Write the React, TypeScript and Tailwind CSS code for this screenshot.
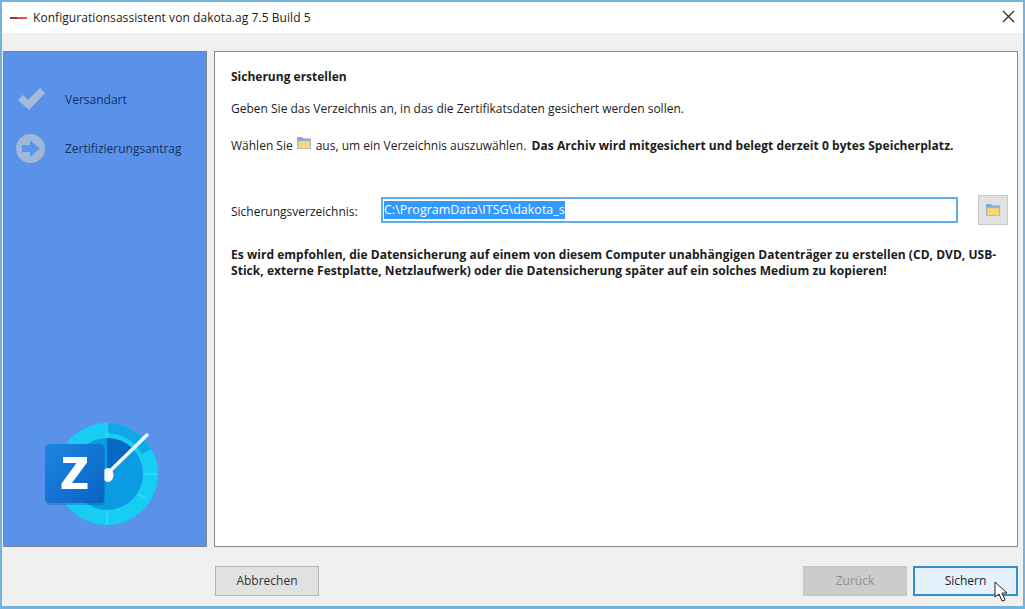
function FolderIcon({ className }: { className?: string }) {
  return (
    <svg className={className} viewBox="0 0 16 14">
      <path d="M1 2.5C1 1.7 1.6 1 2.4 1h3.4l1.6 1.6h6.2c.8 0 1.4.6 1.4 1.4v1H1z" fill="#7fa6cf" />
      <rect x="1" y="4" width="14" height="9" rx="1" fill="#9db8d4" />
      <rect x="2.4" y="5.2" width="11.6" height="7" rx="0.6" fill="#fbd774" />
    </svg>
  );
}

function Logo() {
  return (
    <svg className="w-[116px] h-[108px]" viewBox="0 0 116 108">
      <defs>
        <linearGradient id="tile" x1="0" y1="0" x2="1" y2="1">
          <stop offset="0" stopColor="#1c86e0" />
          <stop offset="1" stopColor="#0a62c4" />
        </linearGradient>
      </defs>
      {/* Zifferblatt */}
      <circle cx="62" cy="52" r="51" fill="#18cdf2" />
      <path d="M62 1a51 51 0 0 1 44 26l-9 5a41 41 0 0 0-35-21z" fill="#10a8e8" />
      <circle cx="62" cy="52" r="36" fill="#0b9be3" />
      <path d="M62 16a36 36 0 0 1 25 10L62 52z" fill="#0468c4" />
      <path d="M62 88v14M98 52h14M24 30l-9-5M24 74l-9 5M93 72l9 5M62 1v15" stroke="#4fdcf5" strokeWidth="1" />
      <path d="M62 52L102 13" stroke="#f4fafd" strokeWidth="3.5" strokeLinecap="round" />
      <ellipse cx="63" cy="53" rx="5.5" ry="7" fill="#f4fafd" />
      {/* Kachel */}
      <rect x="1" y="24" width="59" height="59" rx="4" fill="#0b4f9e" opacity="0.3" />
      <rect x="0" y="22" width="59" height="59" rx="4" fill="url(#tile)" />
      <path d="M18 35h24v5.5L27 61h15.5v6H16.5v-5.5L31.5 41H18z" fill="#ffffff" />
    </svg>
  );
}

function StepCheck() {
  return (
    <svg className="w-[30px] h-[24px]" viewBox="0 0 30 24">
      <path d="M2 12l5-5 5 5L24 0l5 5-16 17z" fill="#a4bcda" />
    </svg>
  );
}

function StepArrow() {
  return (
    <svg className="w-[30px] h-[30px] shrink-0" viewBox="0 0 30 30">
      <circle cx="14.5" cy="14.5" r="14.5" fill="#9fb8d8" />
      <path d="M6 11h8V6l10 8.5L14 23v-5H6z" fill="#5a96ee" />
    </svg>
  );
}

function Cursor() {
  return (
    <svg className="absolute left-[79px] top-[13px] w-[14px] h-[21px]" viewBox="0 0 14 21">
      <path d="M1 1v15l4-3 3 7 3-1-3-7h5z" fill="#ffffff" stroke="#222222" strokeWidth="1" />
    </svg>
  );
}

export default function App() {
  return (
    <div className="w-[1025px] h-[609px] flex flex-col bg-[#f0f0f0] border-x-2 border-t-2 border-b-[3px] border-[#74b4dc] text-[12px] text-[#1c1c1c] font-['Open_Sans','Noto_Sans',sans-serif] overflow-hidden">
      {/* Titelleiste */}
      <div className="h-[31px] shrink-0 bg-white flex items-center pl-[8px] pr-[8px]">
        <svg className="w-[17px] h-[6px] mr-[6px]" viewBox="0 0 17 6">
          <rect x="0" y="2" width="17" height="2" fill="#e0525a" />
          <rect x="0" y="2" width="7" height="2" fill="#8c3a3f" />
        </svg>
        <span className="tracking-[0.06px]">Konfigurationsassistent von dakota.ag 7.5 Build 5</span>
        <svg className="ml-auto -mt-[2px] w-[13px] h-[13px]" viewBox="0 0 13 13">
          <path d="M1 1l11 11M12 1L1 12" stroke="#333333" strokeWidth="1.4" />
        </svg>
      </div>

      <div className="flex flex-1 flex-col pt-[18px] pl-px pr-[5px] pb-[9px]">
        <div className="flex h-[496px] gap-[7px]">
          {/* Schritte */}
          <aside className="w-[204px] shrink-0 bg-[#5a92ea] border border-[#7d8791] flex flex-col justify-between pl-[12px] pb-[16px]">
            <div className="flex flex-col pt-[36px] gap-[25px] text-[#14305e]">
              <div className="flex items-center gap-[19px] h-[24px]">
                <StepCheck />
                <span>Versandart</span>
              </div>
              <div className="flex items-center gap-[19px] h-[24px]">
                <StepArrow />
                <span>Zertifizierungsantrag</span>
              </div>
            </div>
            <div className="pl-[29px]">
              <Logo />
            </div>
          </aside>

          {/* Inhalt */}
          <main className="flex-1 bg-white border border-[#8a8a8a] pt-[16px] pl-[16px] pr-[9px]">
            <h1 className="font-bold leading-[17px]">Sicherung erstellen</h1>
            <p className="mt-[15px] leading-[17px]">
              Geben Sie das Verzeichnis an, in das die Zertifikatsdaten gesichert werden sollen.
            </p>
            <p className="mt-[20px] leading-[17px] flex items-center">
              Wählen Sie
              <FolderIcon className="w-[16px] h-[14px] ml-[3px] mr-[4px] -mt-[6px]" />
              aus, um ein Verzeichnis auszuwählen.&nbsp;
              <b className="ml-[2px] tracking-[0.055px]">Das Archiv wird mitgesichert und belegt derzeit 0 bytes Speicherplatz.</b>
            </p>
            <div className="mt-[41px] flex items-center">
              <label className="w-[150px] shrink-0 mt-[3px]">Sicherungsverzeichnis:</label>
              <div className="w-[577px] h-[26px] border-2 border-[#5fb0e6] flex items-center pl-px text-[12.5px]">
                <span className="bg-[#3399ff] text-white leading-[18px]">C:\ProgramData\ITSG\dakota_s</span>
              </div>
              <button className="ml-[20px] w-[30px] h-[30px] bg-[#e1e1e1] border border-[#c8c8c8] flex items-center justify-center">
                <FolderIcon className="w-[16px] h-[14px]" />
              </button>
            </div>
            <p className="mt-[22px] font-bold leading-[16px] w-[775px] tracking-[0.035px]">
              Es wird empfohlen, die Datensicherung auf einem von diesem Computer unabhängigen Datenträger zu erstellen (CD, DVD, USB-Stick, externe Festplatte, Netzlaufwerk) oder die Datensicherung später auf ein solches Medium zu kopieren!
            </p>
          </main>
        </div>

        {/* Schaltflächen */}
        <div className="mt-[19px] flex pl-[212px]">
          <button className="w-[104px] h-[30px] bg-[#e1e1e1] border border-[#b4b4b4] text-[#333333]">Abbrechen</button>
          <button className="ml-auto w-[104px] h-[30px] bg-[#cccccc] border border-[#c4c4c4] text-[#8f8f8f]">Zurück</button>
          <button className="relative ml-[6px] w-[105px] h-[30px] bg-[#e5f1fb] border-2 border-[#2f8fd0] text-[#1c1c1c]">
            Sichern
            <Cursor />
          </button>
        </div>
      </div>
    </div>
  );
}
